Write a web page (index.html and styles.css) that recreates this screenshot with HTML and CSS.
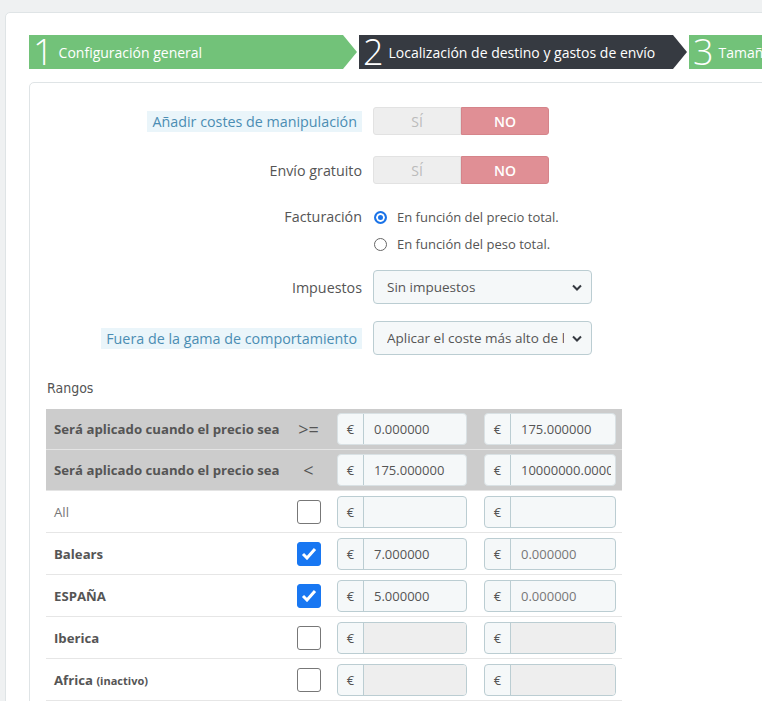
FILE: index.html
```html
<!DOCTYPE html>
<html lang="es">

<head>
    <meta charset="UTF-8">
    <meta name="viewport" content="width=device-width, initial-scale=1.0">
    <title>Transportista</title>
    <link rel="stylesheet" href="styles.css">
</head>

<body>
    <div class="panel">
        <div class="steps">
            <div class="step done"><span class="num">1</span><span class="txt">Configuración general</span></div>
            <div class="step current"><span class="num">2</span><span class="txt">Localización de destino y gastos de envío</span></div>
            <div class="step done"><span class="num">3</span><span class="txt">Tamaño, peso y grupo de acceso</span></div>
        </div>

        <div class="form-panel">
            <div class="row first">
                <div class="row-label"><span class="hint">Añadir costes de manipulación</span></div>
                <div class="control">
                    <div class="toggle"><span class="yes">SÍ</span><span class="no">NO</span></div>
                </div>
            </div>

            <div class="row gap-21">
                <div class="row-label">Envío gratuito</div>
                <div class="control">
                    <div class="toggle"><span class="yes">SÍ</span><span class="no">NO</span></div>
                </div>
            </div>

            <div class="row top gap-23">
                <div class="row-label line">Facturación</div>
                <div class="control radios">
                    <div class="radio-line"><span class="radio checked"></span>En función del precio total.</div>
                    <div class="radio-line"><span class="radio"></span>En función del peso total.</div>
                </div>
            </div>

            <div class="row gap-16">
                <div class="row-label">Impuestos</div>
                <div class="control">
                    <div class="select">
                        <span class="select-text">Sin impuestos</span>
                        <svg width="10" height="7" viewBox="0 0 10 7"><path d="M1 1.5l4 4 4-4" fill="none" stroke="#363a41" stroke-width="2" /></svg>
                    </div>
                </div>
            </div>

            <div class="row gap-17">
                <div class="row-label"><span class="hint">Fuera de la gama de comportamiento</span></div>
                <div class="control">
                    <div class="select">
                        <span class="select-text">Aplicar el coste más alto de la gama definida</span>
                        <svg width="10" height="7" viewBox="0 0 10 7"><path d="M1 1.5l4 4 4-4" fill="none" stroke="#363a41" stroke-width="2" /></svg>
                    </div>
                </div>
            </div>

            <div class="rangos">Rangos</div>

            <div class="ranges">
                <div class="range-row head">
                    <div class="zone">Será aplicado cuando el precio sea</div>
                    <div class="op">&gt;=</div>
                    <div class="cell"><div class="group"><span class="addon">€</span><span class="value">0.000000</span></div></div>
                    <div class="cell"><div class="group wide"><span class="addon">€</span><span class="value">175.000000</span></div></div>
                </div>
                <div class="range-row head">
                    <div class="zone">Será aplicado cuando el precio sea</div>
                    <div class="op">&lt;</div>
                    <div class="cell"><div class="group"><span class="addon">€</span><span class="value">175.000000</span></div></div>
                    <div class="cell"><div class="group wide"><span class="addon">€</span><span class="value">10000000.000000</span></div></div>
                </div>
                <div class="range-row">
                    <div class="zone all">All</div>
                    <div class="op"><span class="check"></span></div>
                    <div class="cell"><div class="group"><span class="addon">€</span><span class="value"></span></div></div>
                    <div class="cell"><div class="group wide"><span class="addon">€</span><span class="value"></span></div></div>
                </div>
                <div class="range-row">
                    <div class="zone">Balears</div>
                    <div class="op"><span class="check checked"><svg width="16" height="13" viewBox="0 0 16 13"><path d="M2 7l4 4 8-9" fill="none" stroke="#fff" stroke-width="3" /></svg></span></div>
                    <div class="cell"><div class="group"><span class="addon">€</span><span class="value">7.000000</span></div></div>
                    <div class="cell"><div class="group wide"><span class="addon">€</span><span class="value muted">0.000000</span></div></div>
                </div>
                <div class="range-row">
                    <div class="zone">ESPAÑA</div>
                    <div class="op"><span class="check checked"><svg width="16" height="13" viewBox="0 0 16 13"><path d="M2 7l4 4 8-9" fill="none" stroke="#fff" stroke-width="3" /></svg></span></div>
                    <div class="cell"><div class="group"><span class="addon">€</span><span class="value">5.000000</span></div></div>
                    <div class="cell"><div class="group wide"><span class="addon">€</span><span class="value muted">0.000000</span></div></div>
                </div>
                <div class="range-row">
                    <div class="zone">Iberica</div>
                    <div class="op"><span class="check"></span></div>
                    <div class="cell"><div class="group"><span class="addon">€</span><span class="value off"></span></div></div>
                    <div class="cell"><div class="group wide"><span class="addon">€</span><span class="value off"></span></div></div>
                </div>
                <div class="range-row">
                    <div class="zone">Africa <small>(inactivo)</small></div>
                    <div class="op"><span class="check"></span></div>
                    <div class="cell"><div class="group"><span class="addon">€</span><span class="value off"></span></div></div>
                    <div class="cell"><div class="group wide"><span class="addon">€</span><span class="value off"></span></div></div>
                </div>
            </div>
        </div>
    </div>
</body>

</html>
```

FILE: styles.css
```css
* {
    margin: 0;
    padding: 0;
    box-sizing: border-box;
}

body {
    width: 762px;
    height: 701px;
    overflow: hidden;
    background-color: #eff1f2;
    font-family: "Open Sans", Arial, sans-serif;
    color: #555;
}

.panel {
    margin: 12px 0 0 5px;
    width: 900px;
    height: 760px;
    background-color: #fff;
    border: 1px solid #dfe4e6;
    border-radius: 5px;
    padding: 22px 0 0 23px;
}

/* wizard steps */
.steps {
    display: flex;
    gap: 2px;
    height: 34px;
}

.step {
    flex-shrink: 0;
    width: 328px;
    display: flex;
    align-items: center;
    padding-left: 4px;
    color: #fff;
    white-space: nowrap;
    clip-path: polygon(0 0, calc(100% - 14px) 0, 100% 50%, calc(100% - 14px) 100%, 0 100%);
}

.step.done {
    background-color: #72c279;
}

.step.current {
    background-color: #363a41;
}

.step .num {
    font-size: 36px;
    font-weight: 300;
    line-height: 34px;
    margin-right: 5px;
}

.step .txt {
    font-size: 14px;
}

/* form */
.form-panel {
    margin-top: 13px;
    width: 840px;
    height: 700px;
    border: 1px solid #dfe4e6;
    border-radius: 5px;
    padding-top: 24px;
}

.row {
    display: flex;
    align-items: center;
}

.row.top {
    align-items: flex-start;
}

.gap-16 { margin-top: 16px; }
.gap-17 { margin-top: 17px; }
.gap-21 { margin-top: 21px; }
.gap-23 { margin-top: 23px; }

.row-label {
    width: 332px;
    text-align: right;
    font-size: 14.3px;
    color: #555;
}

.row-label.line {
    line-height: 20px;
}

.hint {
    background-color: #eaf5fa;
    color: #4b8db3;
    padding: 1px 5px;
}

.control {
    margin-left: 11px;
}

.toggle {
    display: flex;
    width: 176px;
    height: 28px;
    font-size: 14px;
}

.toggle span {
    flex: 1;
    display: flex;
    align-items: center;
    justify-content: center;
}

.toggle .yes {
    background-color: #eeeeee;
    color: #bbb;
    border: 1px solid #e2e2e2;
    border-radius: 3px 0 0 3px;
}

.toggle .no {
    background-color: #e08f95;
    color: #fff;
    font-weight: 600;
    border: 1px solid #d5848a;
    border-radius: 0 3px 3px 0;
}

.radios {
    display: flex;
    flex-direction: column;
    gap: 7px;
}

.radio-line {
    display: flex;
    align-items: center;
    height: 20px;
    font-size: 13px;
    color: #555;
}

.radio {
    width: 13px;
    height: 13px;
    border-radius: 50%;
    border: 1px solid #666;
    margin: 0 10px 0 1px;
}

.radio.checked {
    border: 2px solid #1a73e8;
    background-color: #1a73e8;
    box-shadow: inset 0 0 0 2px #fff;
}

.select {
    width: 219px;
    height: 34px;
    display: flex;
    align-items: center;
    padding: 0 9px 0 13px;
    border: 1px solid #bbcdd2;
    border-radius: 4px;
    background-color: #f5f8f9;
    font-size: 13.5px;
}

.select-text {
    flex: 1;
    overflow: hidden;
    white-space: nowrap;
    margin-right: 8px;
}

/* ranges */
.rangos {
    margin: 23px 0 11px 17px;
    font-family: "DejaVu Sans Condensed", "DejaVu Sans", sans-serif;
    font-size: 14px;
    line-height: 20px;
    color: #555;
}

.ranges {
    width: 576px;
    margin-left: 16px;
}

.range-row {
    display: grid;
    grid-template-columns: 242px 41px 147px 146px;
    align-items: center;
    height: 42px;
    border-bottom: 1px solid #e6e6e6;
}

.range-row.head {
    height: 41px;
    background-color: #cccccc;
    border-bottom: 1px solid #e4e4e4;
}

.zone {
    padding-left: 8px;
    font-size: 13.2px;
    font-weight: 700;
    color: #555;
    white-space: nowrap;
}

.zone.all {
    font-weight: 400;
    color: #777;
}

.zone small {
    font-size: 11px;
}

.op {
    display: flex;
    justify-content: center;
    font-size: 18px;
    color: #555;
}

.check {
    width: 24px;
    height: 24px;
    border: 1px solid #777;
    border-radius: 3px;
    background-color: #fff;
    display: flex;
    align-items: center;
    justify-content: center;
}

.check.checked {
    border-color: #1877f2;
    background-color: #1877f2;
}

.cell {
    padding-left: 8px;
}

.group {
    display: flex;
    width: 130px;
    height: 32px;
    border: 1px solid #bbcdd2;
    border-radius: 4px;
    background-color: #f5f8f9;
    overflow: hidden;
    font-size: 13px;
    color: #555;
}

.head .group {
    border-color: #d9e1e4;
}

.group.wide {
    width: 132px;
}

.addon {
    width: 26px;
    flex-shrink: 0;
    display: flex;
    align-items: center;
    justify-content: center;
    border-right: 1px solid #bbcdd2;
}

.value {
    flex: 1;
    display: flex;
    align-items: center;
    padding-left: 10px;
    border-right: 4px solid transparent;
    white-space: nowrap;
    overflow: hidden;
}

.value.muted {
    color: #777;
}

.value.off {
    background-color: #eeeeee;
}
```
